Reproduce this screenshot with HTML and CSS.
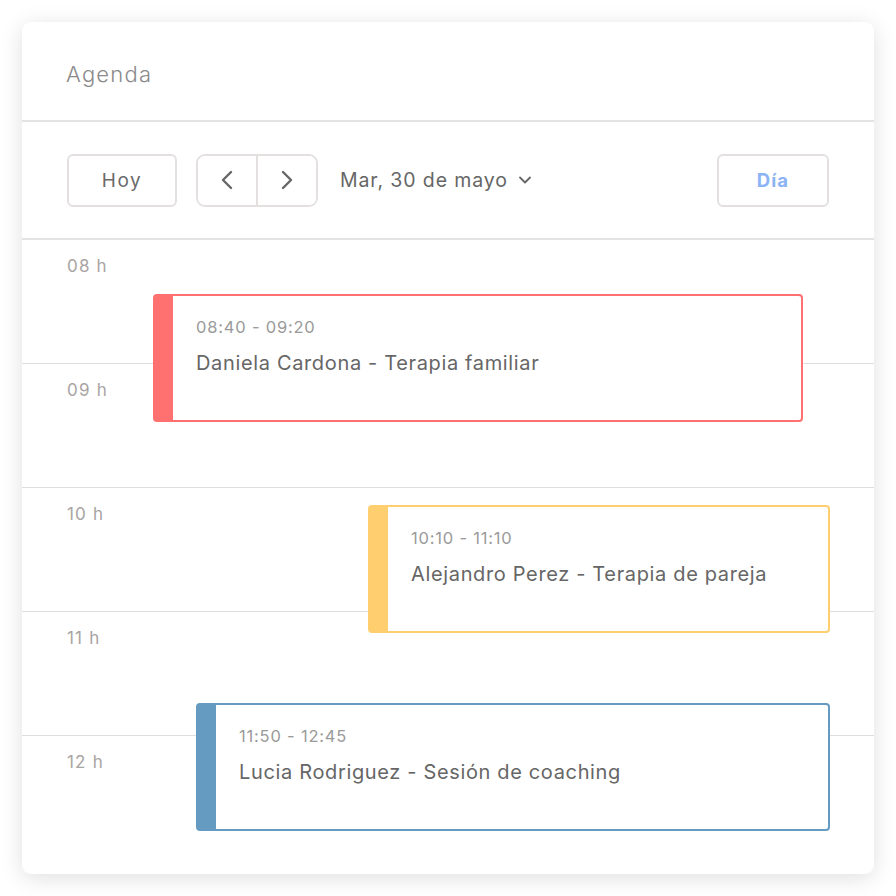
FILE: index.html
```html
<!DOCTYPE html>
<html lang="es">
<head>
<meta charset="utf-8">
<title>Agenda</title>
<link rel="stylesheet" href="styles.css">
</head>
<body>
<div class="card">
  <div class="header">Agenda</div>
  <div class="toolbar">
    <button class="btn btn-today">Hoy</button>
    <div class="nav-group">
      <button class="nav-btn" aria-label="Anterior">
        <svg width="14" height="22" viewBox="0 0 14 22"><path d="M11 3 L3 11 L11 19" fill="none" stroke="#666" stroke-width="2.4" stroke-linecap="round" stroke-linejoin="round"/></svg>
      </button>
      <button class="nav-btn" aria-label="Siguiente">
        <svg width="14" height="22" viewBox="0 0 14 22"><path d="M3 3 L11 11 L3 19" fill="none" stroke="#666" stroke-width="2.4" stroke-linecap="round" stroke-linejoin="round"/></svg>
      </button>
    </div>
    <div class="date">
      <span>Mar, 30 de mayo</span>
      <svg width="14" height="10" viewBox="0 0 14 10"><path d="M2 2.5 L7 7.5 L12 2.5" fill="none" stroke="#666" stroke-width="1.8" stroke-linecap="round" stroke-linejoin="round"/></svg>
    </div>
    <button class="btn btn-view">Día</button>
  </div>
  <div class="timeline">
    <div class="row"><span class="hour">08 h</span></div>
    <div class="row"><span class="hour">09 h</span></div>
    <div class="row"><span class="hour">10 h</span></div>
    <div class="row"><span class="hour">11 h</span></div>
    <div class="row last"><span class="hour">12 h</span></div>

    <div class="event event-red">
      <div class="event-time">08:40 - 09:20</div>
      <div class="event-title">Daniela Cardona - Terapia familiar</div>
    </div>
    <div class="event event-yellow">
      <div class="event-time">10:10 - 11:10</div>
      <div class="event-title">Alejandro Perez - Terapia de pareja</div>
    </div>
    <div class="event event-blue">
      <div class="event-time">11:50 - 12:45</div>
      <div class="event-title">Lucia Rodriguez - Sesión de coaching</div>
    </div>
  </div>
</div>
</body>
</html>
```

FILE: styles.css
```css
* { box-sizing: border-box; }
html, body {
  margin: 0;
  padding: 0;
  background: #ffffff;
}
body {
  font-family: "Inter", "Open Sans", sans-serif;
  width: 896px;
  height: 896px;
  overflow: hidden;
}
.card {
  margin: 22px;
  width: 852px;
  height: 852px;
  background: #fff;
  border-radius: 9px;
  box-shadow: 0 4px 22px rgba(0, 0, 0, 0.13);
  overflow: hidden;
  display: flex;
  flex-direction: column;
}
.header {
  height: 100px;
  flex: none;
  display: flex;
  align-items: center;
  padding: 6px 0 0 44px;
  font-size: 22px;
  font-weight: 300;
  letter-spacing: 1.2px;
  color: #8a8a8a;
  border-bottom: 2px solid #e3e3e3;
}
.toolbar {
  height: 118px;
  flex: none;
  display: flex;
  align-items: center;
  padding: 0 45px;
  border-bottom: 2px solid #e3e3e3;
}
.btn {
  font-family: inherit;
  background: #fff;
  border: 2px solid #e4e0e0;
  border-radius: 6px;
  height: 53px;
  cursor: pointer;
}
.btn-today {
  width: 110px;
  font-size: 19px;
  letter-spacing: 1.6px;
  color: #6a6a6a;
}
.nav-group {
  margin-left: 19px;
  width: 122px;
  height: 53px;
  display: flex;
  border: 2px solid #e4e0e0;
  border-radius: 9px;
  overflow: hidden;
}
.nav-btn {
  flex: 1;
  background: #fff;
  border: none;
  padding: 0;
  display: flex;
  align-items: center;
  justify-content: center;
}
.nav-btn + .nav-btn {
  border-left: 2px solid #e4e0e0;
}
.date {
  margin-left: 22px;
  display: flex;
  align-items: center;
  gap: 10px;
  font-size: 19.5px;
  letter-spacing: 0.9px;
  color: #666;
}
.btn-view {
  margin-left: auto;
  width: 112px;
  font-size: 18.5px;
  font-weight: 700;
  letter-spacing: 1.1px;
  color: #8bb4f5;
}
.timeline {
  position: relative;
  flex: 1;
}
.row {
  height: 124px;
  border-bottom: 1px solid #dedede;
  padding: 16px 0 0 45px;
}
.row.last {
  border-bottom: none;
}
.hour {
  font-size: 17px;
  letter-spacing: 1.2px;
  color: #a9a4a4;
}
.event {
  position: absolute;
  height: 128px;
  background: #fff;
  border: 2px solid;
  border-left-width: 20px;
  border-radius: 4px;
  padding: 21px 0 0 23px;
}
.event-time {
  font-size: 16.5px;
  letter-spacing: 0.8px;
  color: #9a9a9a;
  line-height: 20px;
}
.event-title {
  margin-top: 14px;
  font-size: 20px;
  letter-spacing: 0.65px;
  color: #666;
  line-height: 24px;
}
.event-red {
  border-color: #ff7070;
  top: 54px;
  left: 131px;
  width: 650px;
}
.event-yellow {
  border-color: #ffcf6f;
  top: 265px;
  left: 346px;
  width: 462px;
}
.event-blue {
  border-color: #659bc0;
  top: 463px;
  left: 174px;
  width: 634px;
}
```
